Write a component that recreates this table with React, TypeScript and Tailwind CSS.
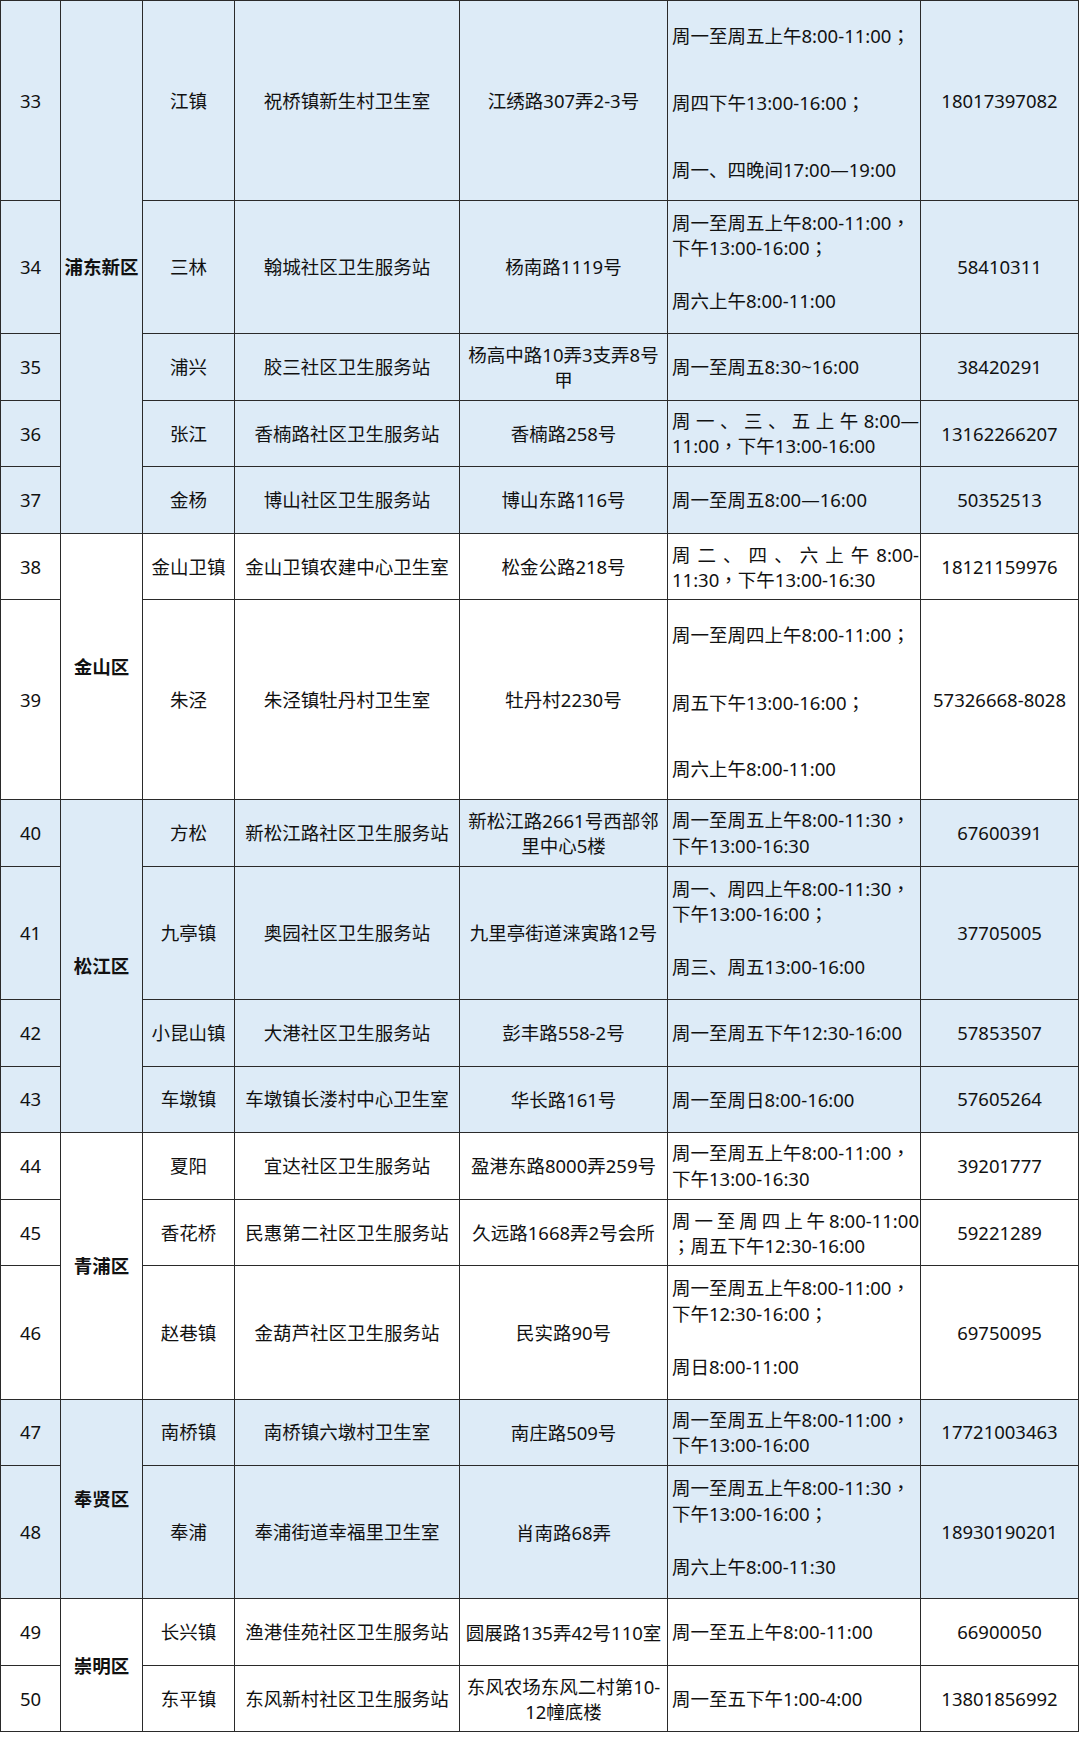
import React from "react";

type Hours =
  | { kind: "plain"; lines: string[] }
  | { kind: "spread"; lines: string[] }
  | { kind: "justify"; lines: string[] };

type Row = {
  n: number;
  u: 1 | 2 | 3;
  town: string;
  name: string;
  addr: string[];
  hours: Hours;
  phone: string;
};

type Group = { district: string; blue: boolean; rows: Row[] };

const P = (...lines: string[]): Hours => ({ kind: "plain", lines });
const S = (...lines: string[]): Hours => ({ kind: "spread", lines });
const J = (...lines: string[]): Hours => ({ kind: "justify", lines });

const groups: Group[] = [
  {
    district: "浦东新区",
    blue: true,
    rows: [
      { n: 33, u: 3, town: "江镇", name: "祝桥镇新生村卫生室", addr: ["江绣路307弄2-3号"], hours: S("周一至周五上午8:00-11:00；", "周四下午13:00-16:00；", "周一、四晚间17:00—19:00"), phone: "18017397082" },
      { n: 34, u: 2, town: "三林", name: "翰城社区卫生服务站", addr: ["杨南路1119号"], hours: P("周一至周五上午8:00-11:00，", "下午13:00-16:00；", "", "周六上午8:00-11:00"), phone: "58410311" },
      { n: 35, u: 1, town: "浦兴", name: "胶三社区卫生服务站", addr: ["杨高中路10弄3支弄8号", "甲"], hours: P("周一至周五8:30~16:00"), phone: "38420291" },
      { n: 36, u: 1, town: "张江", name: "香楠路社区卫生服务站", addr: ["香楠路258号"], hours: J("周一、三、五上午8:00—", "11:00，下午13:00-16:00"), phone: "13162266207" },
      { n: 37, u: 1, town: "金杨", name: "博山社区卫生服务站", addr: ["博山东路116号"], hours: P("周一至周五8:00—16:00"), phone: "50352513" },
    ],
  },
  {
    district: "金山区",
    blue: false,
    rows: [
      { n: 38, u: 1, town: "金山卫镇", name: "金山卫镇农建中心卫生室", addr: ["松金公路218号"], hours: J("周二、四、六上午8:00-", "11:30，下午13:00-16:30"), phone: "18121159976" },
      { n: 39, u: 3, town: "朱泾", name: "朱泾镇牡丹村卫生室", addr: ["牡丹村2230号"], hours: S("周一至周四上午8:00-11:00；", "周五下午13:00-16:00；", "周六上午8:00-11:00"), phone: "57326668-8028" },
    ],
  },
  {
    district: "松江区",
    blue: true,
    rows: [
      { n: 40, u: 1, town: "方松", name: "新松江路社区卫生服务站", addr: ["新松江路2661号西部邻", "里中心5楼"], hours: P("周一至周五上午8:00-11:30，", "下午13:00-16:30"), phone: "67600391" },
      { n: 41, u: 2, town: "九亭镇", name: "奥园社区卫生服务站", addr: ["九里亭街道涞寅路12号"], hours: P("周一、周四上午8:00-11:30，", "下午13:00-16:00；", "", "周三、周五13:00-16:00"), phone: "37705005" },
      { n: 42, u: 1, town: "小昆山镇", name: "大港社区卫生服务站", addr: ["彭丰路558-2号"], hours: P("周一至周五下午12:30-16:00"), phone: "57853507" },
      { n: 43, u: 1, town: "车墩镇", name: "车墩镇长溇村中心卫生室", addr: ["华长路161号"], hours: P("周一至周日8:00-16:00"), phone: "57605264" },
    ],
  },
  {
    district: "青浦区",
    blue: false,
    rows: [
      { n: 44, u: 1, town: "夏阳", name: "宜达社区卫生服务站", addr: ["盈港东路8000弄259号"], hours: P("周一至周五上午8:00-11:00，", "下午13:00-16:30"), phone: "39201777" },
      { n: 45, u: 1, town: "香花桥", name: "民惠第二社区卫生服务站", addr: ["久远路1668弄2号会所"], hours: J("周一至周四上午8:00-11:00", "；周五下午12:30-16:00"), phone: "59221289" },
      { n: 46, u: 2, town: "赵巷镇", name: "金葫芦社区卫生服务站", addr: ["民实路90号"], hours: P("周一至周五上午8:00-11:00，", "下午12:30-16:00；", "", "周日8:00-11:00"), phone: "69750095" },
    ],
  },
  {
    district: "奉贤区",
    blue: true,
    rows: [
      { n: 47, u: 1, town: "南桥镇", name: "南桥镇六墩村卫生室", addr: ["南庄路509号"], hours: P("周一至周五上午8:00-11:00，", "下午13:00-16:00"), phone: "17721003463" },
      { n: 48, u: 2, town: "奉浦", name: "奉浦街道幸福里卫生室", addr: ["肖南路68弄"], hours: P("周一至周五上午8:00-11:30，", "下午13:00-16:00；", "", "周六上午8:00-11:30"), phone: "18930190201" },
    ],
  },
  {
    district: "崇明区",
    blue: false,
    rows: [
      { n: 49, u: 1, town: "长兴镇", name: "渔港佳苑社区卫生服务站", addr: ["圆展路135弄42号110室"], hours: P("周一至五上午8:00-11:00"), phone: "66900050" },
      { n: 50, u: 1, town: "东平镇", name: "东风新村社区卫生服务站", addr: ["东风农场东风二村第10-", "12幢底楼"], hours: P("周一至五下午1:00-4:00"), phone: "13801856992" },
    ],
  },
];

const H: Record<number, string> = {
  1: "h-[66.6px]",
  2: "h-[133.2px]",
  3: "h-[199.8px]",
};

const cell = "border-r border-b border-[#2a2a2a] flex items-center justify-center text-center";

function T({ s }: { s: string }) {
  const parts = s.split(/([，；])/);
  return (
    <>
      {parts.map((p, i) =>
        p === "，" || p === "；" ? (
          <span key={i} className="font-['Noto_Sans_CJK_TC',sans-serif]">{p}</span>
        ) : (
          <React.Fragment key={i}>{p}</React.Fragment>
        )
      )}
    </>
  );
}

function HoursCell({ h }: { h: Hours }) {
  if (h.kind === "spread") {
    return (
      <div className="flex flex-col gap-[40.6px] pt-[4px]">
        {h.lines.map((l, i) => (
          <div key={i} className="leading-[26px] whitespace-nowrap"><T s={l} /></div>
        ))}
      </div>
    );
  }
  if (h.kind === "justify") {
    return (
      <div className="flex flex-col w-full">
        <div className="leading-[25px] whitespace-nowrap text-justify [text-align-last:justify]"><T s={h.lines[0]} /></div>
        <div className="leading-[25px] whitespace-nowrap"><T s={h.lines[1]} /></div>
      </div>
    );
  }
  const multi = h.lines.length > 2;
  return (
    <div className={`flex flex-col ${multi ? "pb-[10px]" : ""}`}>
      {h.lines.map((l, i) =>
        l === "" ? (
          <div key={i} className="h-[27.5px]" />
        ) : (
          <div key={i} className="leading-[25.5px] whitespace-nowrap"><T s={l} /></div>
        )
      )}
    </div>
  );
}

export default function App() {
  return (
    <div className="w-[1080px] h-[1737px] bg-white font-['Noto_Sans','Noto_Sans_CJK_SC',sans-serif] text-[18.5px] text-[#111]">
      <div className="w-[1079px] border-t border-l border-[#2a2a2a] flex flex-col">
        {groups.map((g) => (
          <div key={g.district} className={`flex ${g.blue ? "bg-[#ddebf7]" : "bg-white"}`}>
            <div className="w-[60px] flex flex-col shrink-0">
              {g.rows.map((r) => (
                <div key={r.n} className={`${cell} ${H[r.u]}`}>{r.n}</div>
              ))}
            </div>
            <div className={`${cell} w-[82px] shrink-0 font-bold whitespace-nowrap`}>{g.district}</div>
            <div className="flex flex-col">
              {g.rows.map((r) => (
                <div key={r.n} className={`flex ${H[r.u]}`}>
                  <div className={`${cell} w-[92px] whitespace-nowrap`}>{r.town}</div>
                  <div className={`${cell} w-[225px] whitespace-nowrap`}>{r.name}</div>
                  <div className={`${cell} w-[208px] flex-col leading-[25px] whitespace-nowrap`}>
                    {r.addr.map((a, i) => (
                      <div key={i}>{a}</div>
                    ))}
                  </div>
                  <div className="border-r border-b border-[#2a2a2a] w-[253px] flex items-center pl-[4px] pr-[1px]">
                    <HoursCell h={r.hours} />
                  </div>
                  <div className={`${cell} w-[158px] whitespace-nowrap`}>{r.phone}</div>
                </div>
              ))}
            </div>
          </div>
        ))}
      </div>
    </div>
  );
}
